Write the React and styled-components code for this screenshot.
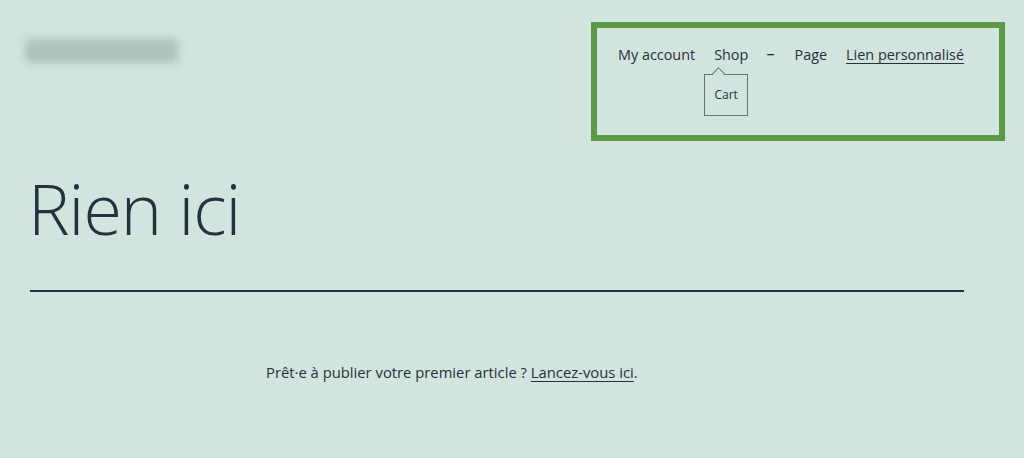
import styled, { createGlobalStyle } from "styled-components"

const GlobalStyle = createGlobalStyle`
  html, body {
    margin: 0;
    padding: 0;
    background: #d1e4dd;
  }
  body {
    font-family: "Open Sans", "Noto Sans", sans-serif;
    color: #28303d;
  }
`

const Page = styled.div`
  width: 1024px;
  height: 458px;
  overflow: hidden;
  background: #d1e4dd;
`

const Header = styled.header`
  display: flex;
  justify-content: space-between;
  align-items: flex-start;
  padding: 22px 19px 0 25px;
`

const Logo = styled.div`
  margin-top: 17px;
  width: 153px;
  height: 24px;
  background: #aec2bb;
  filter: blur(4px);
  border-radius: 4px;
`

const NavBox = styled.nav`
  box-sizing: border-box;
  width: 414px;
  height: 119px;
  border: 6px solid #5c9947;
  padding: 17px 35px 0 21px;
`

const Menu = styled.ul`
  list-style: none;
  margin: 0;
  padding: 0;
  display: flex;
  align-items: flex-start;
  gap: 19px;
`

const Item = styled.li`
  position: relative;
  font-size: 14.4px;
  line-height: 20px;
  white-space: nowrap;
  text-decoration: ${(p) => (p.$underline ? "underline" : "none")};
  text-underline-offset: 3px;
  text-decoration-thickness: 1px;
`

const Toggle = styled.li`
  font-size: 14.4px;
  font-weight: 600;
  line-height: 20px;
  margin-left: -1px;
  margin-right: 1px;
`

const SubMenu = styled.div`
  position: absolute;
  top: 29px;
  left: -10px;
  box-sizing: border-box;
  width: 44px;
  height: 42px;
  border: 1px solid #6b7470;
  background: #d1e4dd;
  font-size: 12px;
  font-weight: 400;
  display: flex;
  align-items: center;
  justify-content: center;

  &::before {
    content: "";
    position: absolute;
    top: -6px;
    left: 9px;
    width: 8px;
    height: 8px;
    background: #d1e4dd;
    border-left: 1px solid #6b7470;
    border-top: 1px solid #6b7470;
    transform: rotate(45deg);
  }
`

const Main = styled.main`
  padding: 0 60px 0 30px;
`

const Title = styled.h1`
  margin: 17px 0 0 -2px;
  font-size: 70px;
  line-height: 100px;
  font-weight: 300;
  letter-spacing: -1px;
`

const Rule = styled.hr`
  margin: 32px 0 0 0;
  border: none;
  height: 2px;
  background: #28303d;
`

const Text = styled.p`
  margin: 68px 0 0 236px;
  font-size: 14.8px;
  line-height: 24px;
`

const Link = styled.a`
  color: inherit;
  text-decoration: underline;
  text-underline-offset: 3px;
  text-decoration-thickness: 1px;
`

export default function App() {
  return (
    <Page>
      <GlobalStyle />
      <Header>
        <Logo />
        <NavBox>
          <Menu>
            <Item>My account</Item>
            <Item>
              Shop
              <SubMenu>Cart</SubMenu>
            </Item>
            <Toggle>−</Toggle>
            <Item>Page</Item>
            <Item $underline>Lien personnalisé</Item>
          </Menu>
        </NavBox>
      </Header>
      <Main>
        <Title>Rien ici</Title>
        <Rule />
        <Text>
          Prêt·e à publier votre premier article ? <Link href="#">Lancez-vous ici</Link>.
        </Text>
      </Main>
    </Page>
  )
}
